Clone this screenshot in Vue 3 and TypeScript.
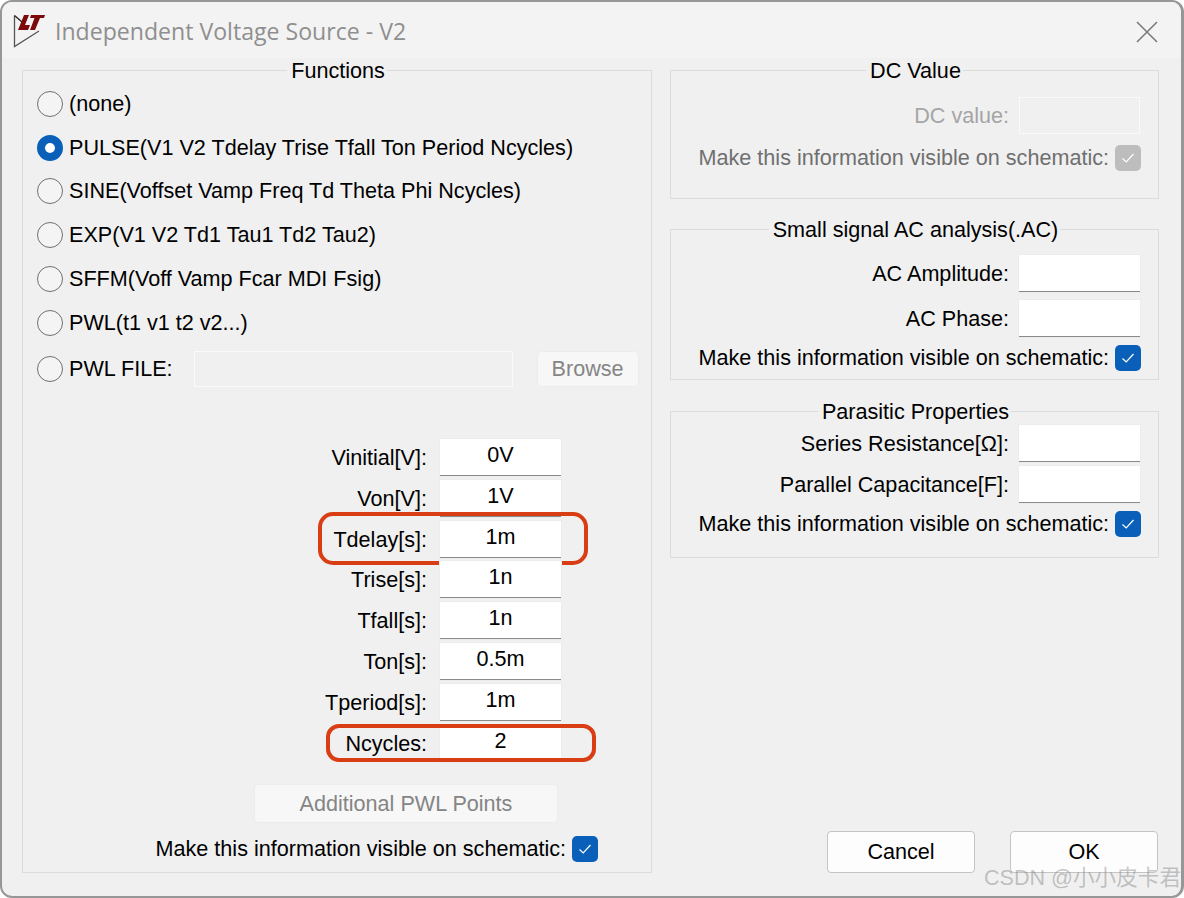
<script setup lang="ts">
const radios = [
  { text: '(none)', on: false },
  { text: 'PULSE(V1 V2 Tdelay Trise Tfall Ton Period Ncycles)', on: true },
  { text: 'SINE(Voffset Vamp Freq Td Theta Phi Ncycles)', on: false },
  { text: 'EXP(V1 V2 Td1 Tau1 Td2 Tau2)', on: false },
  { text: 'SFFM(Voff Vamp Fcar MDI Fsig)', on: false },
  { text: 'PWL(t1 v1 t2 v2...)', on: false },
]
const fields = [
  { label: 'Vinitial[V]:', value: '0V', mark: '' },
  { label: 'Von[V]:', value: '1V', mark: '' },
  { label: 'Tdelay[s]:', value: '1m', mark: 'mark-a' },
  { label: 'Trise[s]:', value: '1n', mark: '' },
  { label: 'Tfall[s]:', value: '1n', mark: '' },
  { label: 'Ton[s]:', value: '0.5m', mark: '' },
  { label: 'Tperiod[s]:', value: '1m', mark: '' },
  { label: 'Ncycles:', value: '2', mark: 'mark-b' },
]
const visibleText = 'Make this information visible on schematic:'
</script>

<template>
  <div class="window">
    <header class="titlebar">
      <svg class="logo" width="34" height="34" viewBox="0 0 34 34">
        <path d="M1.5 1.5V32.5L26 17" fill="none" stroke="#555" stroke-width="1.3" />
        <path d="M1.5 1.5L9 8" fill="none" stroke="#222" stroke-width="1.3" />
        <polygon points="11,1 16,1 12,11 17,11 15,16 5,16" fill="#7c0a0a" />
        <polygon points="18,1 32,1 31,4 27,4 22,16 17,16 21.5,4 17,4" fill="#7c0a0a" />
      </svg>
      <span class="title">Independent Voltage Source - V2</span>
      <svg class="close" width="22" height="22" viewBox="0 0 22 22">
        <path d="M1 1L21 21M21 1L1 21" stroke="#777" stroke-width="1.5" fill="none" />
      </svg>
    </header>

    <main class="content">
      <section class="group functions">
        <div class="legend">Functions</div>
        <div v-for="r in radios" :key="r.text" class="radio-row">
          <span class="radio" :class="{ on: r.on }"></span>
          <span>{{ r.text }}</span>
        </div>
        <div class="radio-row file-row">
          <span class="radio"></span>
          <span>PWL FILE:</span>
          <span class="file-box"></span>
          <span class="browse">Browse</span>
        </div>
        <div class="fields">
          <div v-for="f in fields" :key="f.label" class="field" :class="f.mark">
            <span class="label">{{ f.label }}</span>
            <span class="input">{{ f.value }}</span>
            <span v-if="f.mark" class="ring"></span>
          </div>
        </div>
        <div class="extra">Additional PWL Points</div>
        <div class="visible left-visible">
          <span>{{ visibleText }}</span>
          <span class="check"><svg width="14" height="12" viewBox="0 0 14 12"><path d="M1.5 6.5L5.2 10L12.5 2" fill="none" stroke="#fff" stroke-width="1.2" /></svg></span>
        </div>
      </section>

      <aside class="side">
        <section class="group dc">
          <div class="legend">DC Value</div>
          <div class="row dim-row">
            <span class="dim-label">DC value:</span>
            <span class="box off"></span>
          </div>
          <div class="visible off-text">
            <span>{{ visibleText }}</span>
            <span class="check grey"><svg width="14" height="12" viewBox="0 0 14 12"><path d="M1.5 6.5L5.2 10L12.5 2" fill="none" stroke="#fff" stroke-width="1.2" /></svg></span>
          </div>
        </section>

        <section class="group ac">
          <div class="legend">Small signal AC analysis(.AC)</div>
          <div class="row">
            <span>AC Amplitude:</span>
            <span class="box"></span>
          </div>
          <div class="row">
            <span>AC Phase:</span>
            <span class="box"></span>
          </div>
          <div class="visible">
            <span>{{ visibleText }}</span>
            <span class="check"><svg width="14" height="12" viewBox="0 0 14 12"><path d="M1.5 6.5L5.2 10L12.5 2" fill="none" stroke="#fff" stroke-width="1.2" /></svg></span>
          </div>
        </section>

        <section class="group parasitic">
          <div class="legend">Parasitic Properties</div>
          <div class="row">
            <span>Series Resistance[Ω]:</span>
            <span class="box"></span>
          </div>
          <div class="row">
            <span>Parallel Capacitance[F]:</span>
            <span class="box"></span>
          </div>
          <div class="visible">
            <span>{{ visibleText }}</span>
            <span class="check"><svg width="14" height="12" viewBox="0 0 14 12"><path d="M1.5 6.5L5.2 10L12.5 2" fill="none" stroke="#fff" stroke-width="1.2" /></svg></span>
          </div>
        </section>

        <div class="actions">
          <span class="btn">Cancel</span>
          <span class="btn">OK</span>
        </div>
      </aside>
    </main>

    <div class="watermark">CSDN @小小皮卡君</div>
  </div>
</template>

<style>
html, body { margin: 0; background: #fff; }
</style>

<style scoped>
.window {
  position: relative;
  box-sizing: border-box;
  width: 1184px;
  height: 898px;
  border: 2px solid #979797;
  border-right-width: 3px;
  border-radius: 12px;
  background: #f0f0f0;
  overflow: hidden;
  color: #000;
  font-family: "Liberation Sans", Arial, sans-serif;
  font-size: 21.6px;
}
.titlebar {
  position: relative;
  display: flex;
  align-items: center;
  height: 56px;
  padding-left: 11px;
  background: #f3f3f3;
}
.logo { flex: none; margin-top: 2px; margin-right: 8px; }
.title {
  font-family: "Open Sans", sans-serif;
  font-size: 23.1px;
  color: #8f8f8f;
  margin-top: 2px;
}
.close { margin-left: auto; margin-right: 23px; margin-top: 3px; }
.content {
  display: grid;
  grid-template-columns: 630px 489px;
  column-gap: 18px;
  padding: 12px 0 0 20px;
}
.group {
  box-sizing: border-box;
  display: flex;
  flex-direction: column;
  border: 1px solid #dcdcdc;
}
.legend {
  align-self: center;
  height: 24px;
  line-height: 24px;
  margin-top: -12px;
  padding: 0 2px 0 4px;
  background: #f0f0f0;
  flex: none;
}
.functions { height: 803px; }
.functions .legend { margin-bottom: -1px; }
.radio-row {
  display: flex;
  align-items: center;
  height: 43.8px;
  padding-left: 14px;
  gap: 6px;
  flex: none;
}
.radio {
  box-sizing: border-box;
  flex: none;
  width: 26px;
  height: 26px;
  border: 1.5px solid #707070;
  border-radius: 50%;
  background: #f4f4f4;
}
.radio.on { border: 8px solid #0a5fb8; background: #fff; }
.file-row { height: 48px; }
.file-box {
  box-sizing: border-box;
  width: 319px;
  height: 36px;
  margin-left: 15px;
  border: 1px solid #fafafa;
}
.browse {
  box-sizing: border-box;
  width: 102px;
  height: 36px;
  line-height: 34px;
  margin-left: 18px;
  text-align: center;
  color: #858585;
  background: #f7f7f7;
  border: 1px solid #ececec;
  border-radius: 4px;
}
.fields {
  display: flex;
  flex-direction: column;
  gap: 3.8px;
  margin-top: 46.2px;
  padding-right: 90px;
}
.field {
  position: relative;
  display: flex;
  justify-content: flex-end;
  align-items: center;
  gap: 13px;
  height: 37px;
}
.label { padding-top: 1px; }
.input {
  box-sizing: border-box;
  width: 121px;
  height: 37px;
  line-height: 32px;
  text-align: center;
  background: #fff;
  border-bottom: 1px solid #8a8a8a;
  box-shadow: 0 0 0 1px #ececec;
}
.mark-b .input { border-bottom: 0; }
.ring {
  position: absolute;
  box-sizing: border-box;
  border: 4px solid #d93d14;
}
.mark-a .ring { left: 295px; width: 270px; top: -9px; height: 53px; border-radius: 15px; }
.mark-b .ring { left: 303px; width: 270px; top: -1px; height: 38px; border-radius: 13px; }
.extra {
  box-sizing: border-box;
  align-self: flex-start;
  width: 304px;
  height: 39px;
  line-height: 38px;
  margin: 22px 0 0 231px;
  text-align: center;
  color: #858585;
  background: #f7f7f7;
  border: 1px solid #ececec;
  border-radius: 4px;
}
.visible {
  display: flex;
  justify-content: flex-end;
  align-items: center;
  gap: 6px;
  height: 26px;
  padding-right: 17px;
  flex: none;
}
.left-visible { margin-top: 13px; padding-right: 53px; }
.check {
  box-sizing: border-box;
  flex: none;
  display: flex;
  align-items: center;
  justify-content: center;
  width: 26px;
  height: 26px;
  border-radius: 5px;
  background: #0a5fb8;
}
.check.grey { background: #bdbdbd; }
.off-text { color: #6f6f6f; margin-top: 11px; }
.side { display: flex; flex-direction: column; height: 803px; }
.row {
  display: flex;
  justify-content: flex-end;
  align-items: center;
  gap: 10px;
  height: 37px;
  margin-bottom: 8px;
  padding-right: 18px;
  flex: none;
}
.box {
  box-sizing: border-box;
  width: 121px;
  height: 37px;
  background: #fff;
  border-bottom: 1px solid #8a8a8a;
  box-shadow: 0 0 0 1px #ececec;
}
.box.off {
  background: transparent;
  border: 1px solid #fafafa;
  box-shadow: none;
}
.dc { height: 129px; }
.dim-row { margin: 14px 0 0; }
.dim-label { color: #a5a5a5; }
.ac { height: 151px; margin-top: 30px; }
.ac .legend + .row { margin-top: 13px; }
.parasitic { height: 147px; margin-top: 31px; }
.parasitic .row { margin-bottom: 4px; }
.parasitic .legend + .row { margin-top: 1px; }
.parasitic .visible { margin-top: 4px; }
.actions {
  display: flex;
  justify-content: flex-end;
  gap: 35px;
  margin-top: auto;
  padding-right: 1px;
}
.btn {
  box-sizing: border-box;
  width: 148px;
  height: 42px;
  line-height: 40px;
  text-align: center;
  background: #fdfdfd;
  border: 1px solid #c4c4c4;
  border-radius: 4px;
}
.watermark {
  position: absolute;
  right: 0;
  bottom: 5px;
  font-family: "Liberation Sans", "Noto Sans CJK SC", sans-serif;
  font-size: 21.6px;
  line-height: 26px;
  color: rgba(120, 120, 120, 0.42);
  white-space: nowrap;
}
</style>
